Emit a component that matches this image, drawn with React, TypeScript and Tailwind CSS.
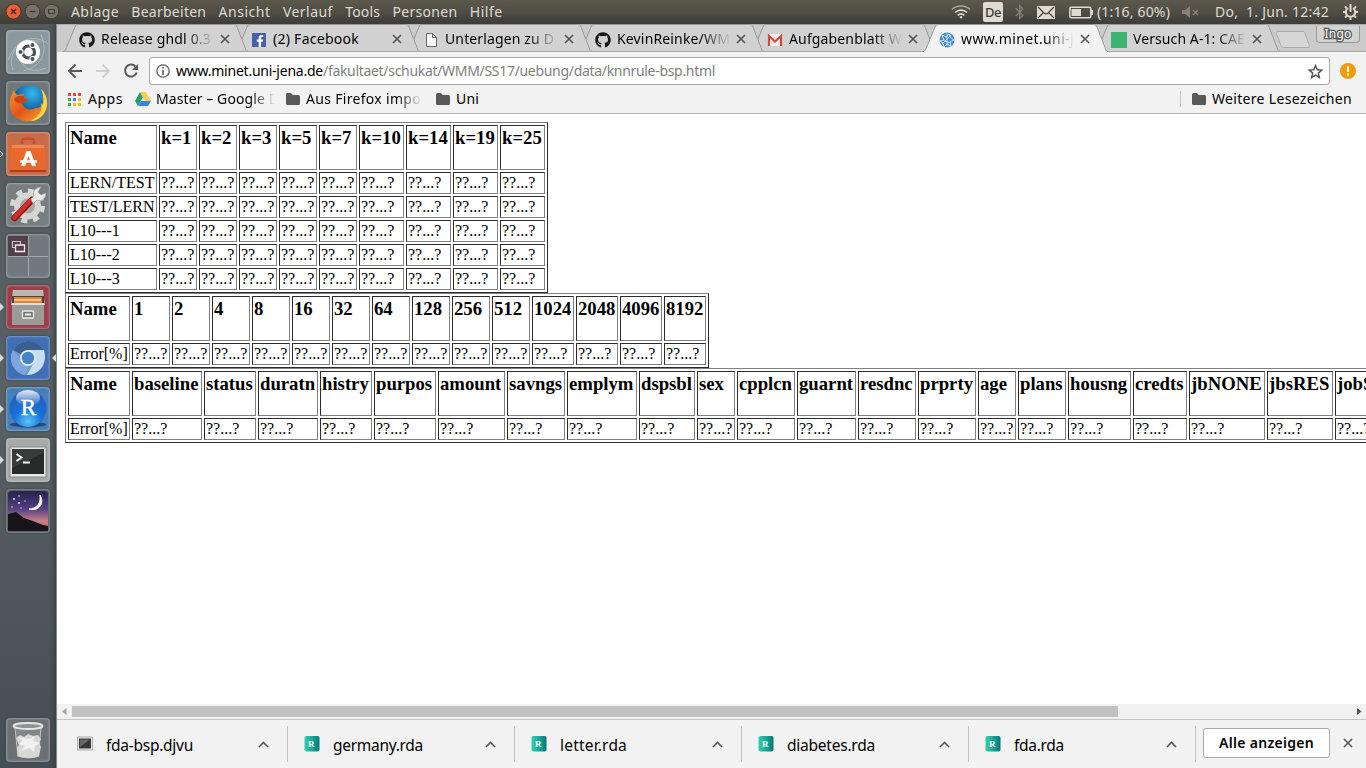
import { useLayoutEffect, useRef, type ReactNode } from "react";
import { FaBluetoothB, FaFacebookF, FaGithub } from "react-icons/fa";

/* Text tracked so that it fills a given width. */
function Fit({ w, className = "", children }: { w: number; className?: string; children: ReactNode }) {
  const ref = useRef<HTMLSpanElement>(null);
  useLayoutEffect(() => {
    const el = ref.current;
    if (!el) return;
    el.style.letterSpacing = "0px";
    const count = (el.textContent || "").length;
    el.style.letterSpacing = `${(w - el.getBoundingClientRect().width) / count}px`;
  }, [w]);
  return (
    <span ref={ref} className={`inline-block shrink-0 whitespace-pre ${className}`}>
      {children}
    </span>
  );
}

const menus: [string, number][] = [
  ["Ablage", 48],
  ["Bearbeiten", 75],
  ["Ansicht", 52],
  ["Verlauf", 50],
  ["Tools", 35],
  ["Personen", 65],
  ["Hilfe", 33],
];

function TopBar() {
  return (
    <header className="flex h-6 shrink-0 items-center bg-gradient-to-b from-[#5c584c] via-[#504d45] to-[#3d3c38] text-[14px] leading-6 text-[#dfdbd2]">
      <svg width="62" height="24" viewBox="0 0 62 24" className="mr-[9px] shrink-0" fill="none">
        <circle cx="13.5" cy="11.5" r="7.5" fill="#ec5f32" stroke="#3b2a22" strokeWidth=".8" />
        <path d="M11 9l5 5M16 9l-5 5" stroke="#4a2416" strokeWidth="1.4" />
        <circle cx="32.5" cy="11.5" r="7.3" fill="#77736a" stroke="#3c3b37" />
        <path d="M29.5 11.5h6" stroke="#3c3b37" strokeWidth="1.4" />
        <circle cx="51.5" cy="11.5" r="7.3" fill="#77736a" stroke="#3c3b37" />
        <path d="M48.5 9.5h6v4h-6z" stroke="#3c3b37" strokeWidth="1.2" />
      </svg>
      <nav className="flex gap-[12.3px]">
        {menus.map(([m, w]) => (
          <Fit key={m} w={w}>{m}</Fit>
        ))}
      </nav>
      <div className="ml-auto flex items-center">
        <svg width="20" height="16" viewBox="0 0 20 16" fill="none" strokeWidth="1.6" className="mr-[12px]">
          <path d="M1 5.5C6 .8 14 .8 19 5.5" stroke="#aaa69c" />
          <path d="M4 8.500c3.500-3.200 8.500-3.200 12 0" stroke="#dfdbd2" />
          <path d="M6.700 11.300c2-1.700 4.600-1.700 6.600 0" stroke="#dfdbd2" />
          <path d="M8.300 13l1.700-1 1.700 1-1.700 1.700z" fill="#dfdbd2" />
        </svg>
        <span className="mr-[9px] flex h-5 w-5 items-center justify-center rounded-[2px] bg-[#dfdbd2] text-[13px] leading-5 font-medium text-[#3c3b37]">
          <Fit w={16}>De</Fit>
        </span>
        <FaBluetoothB className="mr-[10px] h-4 w-[15px] text-[#858176]" />
        <svg width="18" height="13" viewBox="0 0 18 13" className="mr-[14px]">
          <path d="M0 0h18v13H0z" fill="#dfdbd2" />
          <path d="M1 1l6 6 2 1 2-1 6-6M1 12l5-5M17 12l-5-5" fill="none" stroke="#45433d" strokeWidth="1.2" />
        </svg>
        <svg width="25" height="13" viewBox="0 0 25 13" className="mr-[3px]">
          <rect x=".8" y="1.200" width="21" height="10.600" rx="1.500" fill="none" stroke="#dfdbd2" strokeWidth="1.500" />
          <path d="M2.500 3h9.500v7H2.500zM22 4h2v5h-2z" fill="#dfdbd2" />
        </svg>
        <Fit w={73} className="mr-[12px]">(1:16, 60%)</Fit>
        <svg width="19" height="14" viewBox="0 0 19 14" className="mr-[14px]">
          <path d="M0 5h3l5-4v12L3 9H0z" fill="#858176" />
          <path d="M11 5l5 5M16 5l-5 5" stroke="#858176" strokeWidth="1.500" />
        </svg>
        <Fit w={114} className="mr-[13px]">Do,  1. Jun. 12:42</Fit>
        <svg width="17" height="18" viewBox="0 0 17 18" className="mr-[7px]" fill="none" stroke="#dfdbd2">
          <path d="M6 5a4.700 4.700 0 1 0 5 0" strokeWidth="2" />
          <path d="M8.500 1v8" strokeWidth="2" />
          <path d="M1 9h2M14 9h2M8.500 14.500V17M3 3.500l1.500 1.500M14 3.500L12.500 5M3 14.500L4.700 13M14 14.500L12.300 13" strokeWidth="2" />
        </svg>
      </div>
    </header>
  );
}

function Ubuntu() {
  return (
    <svg viewBox="0 0 44 44" fill="none">
      <path d="M2 30C12 5 31 5 42 14M7 40C0 22 17 5 35 12M40 38C20 46 9 32 15 14M35 5c8 17 0 32-18 36" stroke="#c8d0d3" strokeWidth="1" opacity=".55" />
      <circle cx="22" cy="22" r="12" fill="#fff" />
      <circle cx="22.500" cy="22" r="6" stroke="#46525a" strokeWidth="3.200" />
      <g fill="#46525a" stroke="#fff" strokeWidth="1.200">
        <circle cx="14.500" cy="22" r="2.600" /><circle cx="26.500" cy="14.900" r="2.600" /><circle cx="26.500" cy="29.100" r="2.600" />
      </g>
    </svg>
  );
}

function Firefox() {
  return (
    <svg viewBox="0 0 44 44">
      <defs>
        <radialGradient id="globe" cx=".6" cy=".25" r=".8"><stop stopColor="#35b9ec" /><stop offset=".6" stopColor="#1463a5" /><stop offset="1" stopColor="#122f68" /></radialGradient>
        <linearGradient id="fox" x2="1" y2="1"><stop stopColor="#f39b27" /><stop offset=".5" stopColor="#e4531b" /><stop offset="1" stopColor="#f6b331" /></linearGradient>
      </defs>
      <circle cx="23" cy="21" r="17" fill="url(#globe)" />
      <path d="M35 8c7 6 8 18 2 25-7 9-20 9-28 3C3 31 2 20 6 14l1-5 4 5 7-1c-1 2 1 4 4 5-1 3-5 3-6 5 4 7 10 6 14 4 8 0 8-8 6-12l2 2C38 12 37 10 35 8z" fill="url(#fox)" />
      <path d="M35 8c7 6 9 19 1 27-3 3-7 5-11 5 8-5 12-10 10-18l2 2c1-7 0-11-2-16z" fill="#fbd442" />
      <path d="M8 18c2-3 6-4 10-3 0 2 1 3 4 3-1 3-5 3-6 5-3-1-6 0-8-5z" fill="#c9431a" />
    </svg>
  );
}

function Software() {
  return (
    <svg viewBox="0 0 44 44">
      <path d="M16 12V8c0-2 12-2 12 0v4" fill="none" stroke="#c64c2c" strokeWidth="2.500" />
      <path d="M5 14h34l1 25H4z" fill="#e9682d" />
      <path d="M6 13h32v3H6z" fill="#ef8952" />
      <path d="M4 38h36v2H4z" fill="#ac3e20" />
      <path d="M15 34l5.500-15h4L30 34h-4l-3.500-10-3.500 10z" fill="#fff" />
      <path d="M14 29.500h17" stroke="#fff" strokeWidth="2.500" />
    </svg>
  );
}

function Settings() {
  return (
    <svg viewBox="0 0 44 44">
      <circle cx="21.500" cy="23" r="15" fill="none" stroke="#d7d7d5" strokeWidth="5" strokeDasharray="6 5.780" />
      <circle cx="21.500" cy="23" r="10.500" fill="#a6a8a7" stroke="#d5d5d3" strokeWidth="6" />
      <path d="M8.500 35L26 17" stroke="#861615" strokeWidth="6.500" strokeLinecap="round" />
      <path d="M8.500 34.500L25 17" stroke="#d42e2b" strokeWidth="4.500" strokeLinecap="round" />
      <path d="M25 16l3-3c-2-5 2-9 7-9l-3 5 3 3 5-2c0 6-5 9-9 7l-4 4z" fill="#e9e9e8" stroke="#999" strokeWidth=".6" />
    </svg>
  );
}

function Workspaces() {
  return (
    <svg viewBox="0 0 44 44">
      <path d="M2 2h20v20H2z" fill="#563d4a" />
      <path d="M22.500 2v40M2 22.500h40" stroke="#a0a8aa" strokeWidth="1" />
      <path d="M6.500 7.500h8v6h-8z" fill="#563d4a" stroke="#c9c1c6" strokeWidth="1.200" />
      <path d="M9.500 11h9v6.500h-9z" fill="#563d4a" stroke="#f0ecee" strokeWidth="1.300" />
    </svg>
  );
}

function Files() {
  return (
    <svg viewBox="0 0 44 44">
      <path d="M7 5h30l2 15H5z" fill="#b8b8b6" />
      <path d="M6 11h32v10H6z" fill="#454340" />
      <path d="M8 12h28v7H8z" fill="#e3843c" /><path d="M8 14h27v2H8z" fill="#f6c583" />
      <path d="M6 18h32v22H6z" fill="#9b9b99" /><path d="M6 18h32v2H6z" fill="#dedddb" />
      <rect x="16.500" y="26" width="11" height="7" rx="1" fill="#777" stroke="#eee" strokeWidth="1.300" />
      <path d="M19 28.500h6v2h-6z" fill="#f3f3f3" />
    </svg>
  );
}

function Chromium() {
  return (
    <svg viewBox="0 0 44 44">
      <circle cx="22" cy="22" r="17" fill="#719bd1" />
      <path d="M22 22L7 14C14 2 31 2 37 14z" fill="#395f93" />
      <path d="M22 14h16c4 14-5 25-17 25l8-14z" fill="#c8dcf2" />
      <path d="M7 14l8 12 7 5-3 8C7 37 2 23 7 14z" fill="#7da7dc" />
      <circle cx="22" cy="22" r="8" fill="#e1effc" /><circle cx="22" cy="22" r="6.200" fill="#4583c6" />
    </svg>
  );
}

function RStudio() {
  return (
    <svg viewBox="0 0 44 44">
      <defs><radialGradient id="ball" cx=".5" cy=".85" r=".8"><stop stopColor="#59c4f5" /><stop offset=".45" stopColor="#1673d8" /><stop offset="1" stopColor="#275bbd" /></radialGradient>
        <linearGradient id="shine" x2="0" y2="1"><stop stopColor="#fff" stopOpacity=".9" /><stop offset="1" stopColor="#fff" stopOpacity="0" /></linearGradient></defs>
      <ellipse cx="22" cy="37.500" rx="18" ry="3" fill="#294982" />
      <circle cx="22" cy="21.500" r="18.500" fill="url(#ball)" />
      <ellipse cx="22" cy="11" rx="12" ry="8" fill="url(#shine)" />
      <text x="22.500" y="28" textAnchor="middle" fontSize="23" fontFamily="Liberation Serif, serif" fill="#fff" stroke="#fff" strokeWidth=".5">R</text>
    </svg>
  );
}

function Terminal() {
  return (
    <svg viewBox="0 0 44 44">
      <path d="M4 9h36v30H4z" fill="#e9e9e7" stroke="#888" />
      <path d="M6 11h32v25H6z" fill="#292b2b" /><path d="M6 11h32v4L6 30z" fill="#464848" opacity=".6" />
      <path d="M10.500 16l5 3.500-5 3.500M17 24.500h7" fill="none" stroke="#fff" strokeWidth="1.900" />
    </svg>
  );
}

function Stellarium() {
  return (
    <svg viewBox="0 0 44 44">
      <defs><linearGradient id="night" x2="0" y2="1"><stop stopColor="#26214e" /><stop offset=".45" stopColor="#544083" /><stop offset=".75" stopColor="#c9808a" /><stop offset="1" stopColor="#c85c37" /></linearGradient></defs>
      <rect x="2" y="2" width="40" height="40" rx="4" fill="url(#night)" />
      <path d="M2 25l8-2 8 6 9 3 10 4 5 1v5H2z" fill="#17141a" />
      <path d="M34 6c5 8-1 17-11 14 8 0 12-6 11-14z" fill="#fff" stroke="#fff" />
      <g fill="#e6e4f7"><circle cx="8" cy="10" r="1" /><circle cx="13" cy="7" r=".8" /><circle cx="13" cy="14" r="1" /><circle cx="6" cy="18" r=".8" /><circle cx="19" cy="12" r=".7" /><circle cx="15" cy="19" r=".7" /></g>
    </svg>
  );
}

function Trash() {
  return (
    <svg viewBox="0 0 44 44">
      <path d="M9 10h27l-3 29H12z" fill="#989d9e" opacity=".5" />
      <path d="M10 20l4-3 4 2 4-3 5 2 5-1 3 4-2 4 2 4-2 9c-4 3-17 3-21 0l-1-8 2-3z" fill="#d7d7d5" />
      <path d="M12 19l5 3-4 4 6 2-4 5 8-3 5 4 1-6 5-3-7-2 2-5-6 3z" fill="#f8f8f7" opacity=".8" />
      <ellipse cx="22" cy="8" rx="14.500" ry="3" fill="#8f9393" stroke="#e6e6e4" strokeWidth="1.800" />
      <path d="M9 10l3 29M35 10l-3 29" stroke="#dadddd" opacity=".7" />
    </svg>
  );
}

const launchers: { bg: string; icon: ReactNode; run?: "open" | "idle" | "focus" }[] = [
  { bg: "bg-[#8b999f]", icon: <Ubuntu /> },
  { bg: "bg-[#70777a]", icon: <Firefox /> },
  { bg: "bg-[#c96c49]", icon: <Software />, run: "idle" },
  { bg: "bg-[#787e80]", icon: <Settings /> },
  { bg: "bg-[#70797d]", icon: <Workspaces /> },
  { bg: "bg-[#9b3f4c]", icon: <Files />, run: "open" },
  { bg: "bg-[#416fb5]", icon: <Chromium />, run: "focus" },
  { bg: "bg-[#467fb9]", icon: <RStudio />, run: "open" },
  { bg: "bg-[#a6a9a9]", icon: <Terminal />, run: "open" },
  { bg: "bg-[#535960]", icon: <Stellarium /> },
];

function Tile({ bg, icon, run }: { bg: string; icon: ReactNode; run?: string }) {
  return (
    <div className="flex h-[44px] items-center">
      <svg width="6" height="8" viewBox="0 0 6 8" className="shrink-0">
        {run === "idle" && <path d="M0 1l3 3-3 3" fill="none" stroke="#d7dada" />}
        {(run === "open" || run === "focus") && <path d="M0 0l4 4-4 4z" fill="#d7dada" />}
      </svg>
      <div className={`h-[44px] w-[44px] shrink-0 overflow-hidden rounded-[4px] shadow-[inset_0_0_2px_1px_rgba(255,255,255,0.3),0_0_2px_#303638] ${bg}`}>{icon}</div>
      {run === "focus" && <svg width="6" height="8" viewBox="0 0 6 8"><path d="M6 0L2 4l4 4z" fill="#d7dada" /></svg>}
    </div>
  );
}

function Launcher() {
  return (
    <aside className="flex w-[57px] shrink-0 flex-col justify-between border-r border-[#838a8d] bg-gradient-to-b from-[#52595b] via-[#596164] to-[#454e54] pt-[6px] pb-[6px] shadow-[inset_-6px_0_5px_-5px_#30383b]">
      <div className="flex flex-col gap-[7px]">
        {launchers.map((l, i) => <Tile key={i} {...l} />)}
      </div>
      <Tile bg="bg-[#6a7073]" icon={<Trash />} />
    </aside>
  );
}

const Gmail = () => (
  <svg width="16" height="16" viewBox="0 0 16 16"><path d="M1 2h14v12H1z" fill="#f1eeee" /><path d="M2 14V4l6 5.500L14 4v10" fill="none" stroke="#d6493b" strokeWidth="2.200" /></svg>
);
const Page = () => (
  <svg width="16" height="16" viewBox="0 0 16 16"><path d="M3.500 1.500h6l4 4v9h-10zM9.500 1.500v4h4" fill="#f8f8f8" stroke="#666" /></svg>
);
const Seal = () => (
  <svg width="16" height="16" viewBox="0 0 16 16" fill="none"><circle cx="8" cy="8" r="7.500" fill="#4689cd" /><path d="M3 3l4 2 3-3 2 4 3 2-4 2 1 4-4-2-3 3-1-4-3-2 4-1zM8 1v13M3 12l9-9M5 9l7 2" stroke="#d9eaf8" strokeWidth=".9" /></svg>
);

const tabs: { title: string; w: number; icon: ReactNode; z: string; active?: boolean }[] = [
  { title: "Release ghdl 0.3", w: 110, icon: <FaGithub size={16} color="#171515" />, z: "z-[7]" },
  { title: "(2) Facebook", w: 86, icon: <span className="flex h-[14px] w-[14px] items-end justify-end bg-[#4661a5]"><FaFacebookF size={12} color="#fff" /></span>, z: "z-[6]" },
  { title: "Unterlagen zu D", w: 109, icon: <Page />, z: "z-[5]" },
  { title: "KevinReinke/WM", w: 113, icon: <FaGithub size={16} color="#171515" />, z: "z-[4]" },
  { title: "Aufgabenblatt W", w: 113, icon: <Gmail />, z: "z-[3]" },
  { title: "www.minet.uni-j", w: 113, icon: <Seal />, z: "z-[8]", active: true },
  { title: "Versuch A-1: CAE", w: 112, icon: <span className="h-4 w-4 bg-[#3cb371]" />, z: "z-[1]" },
];

function Tabs() {
  return (
    <div className="flex h-7 shrink-0 border-t border-[#aaa] bg-[#cbcbcb] pl-[5px]">
      {tabs.map((t) => (
        <div key={t.title} className={`relative flex h-[28px] w-[172px] shrink-0 items-center pl-[17px] ${t.z}`}>
          <svg width="187" height="28" viewBox="0 0 187 28" className="absolute top-[-1px] left-0">
            <path d="M.5 27.500c3 0 3-2 4-4L13 3c1-2 1-2.500 3-2.500h155c2 0 3 0 4 2.500l8 20.500c1 3 1 4 3 4" fill={t.active ? "#f2f2f2" : "#d2d2d2"} stroke="#999" />
            {t.active ? <path d="M2 27.500h183" stroke="#f2f2f2" /> : <path d="M0 27.500h187" stroke="#a4a4a4" />}
          </svg>
          <span className="relative mt-[1px] flex w-[16px] shrink-0 justify-center">{t.icon}</span>
          <span className={`relative ml-[6px] flex w-[116px] overflow-hidden text-[14px] leading-6 text-black ${t.w > 90 ? "[mask-image:linear-gradient(to_right,#000_72%,transparent_98%)]" : ""}`}>
            <Fit w={t.w}>{t.title}</Fit>
          </span>
          <svg width="10" height="10" viewBox="0 0 10 10" className="relative ml-[3px] shrink-0"><path d="M1 1l8 8M9 1L1 9" stroke="#555" strokeWidth="1.700" /></svg>
        </div>
      ))}
      <div className="flex h-[27px] flex-1 justify-between border-b border-[#a4a4a4]">
        <svg width="36" height="20" viewBox="0 0 36 20" className="mt-[5px] ml-[9px] shrink-0"><path d="M3 1.500h24c2 0 2 0 3 2l4 11c1 3 0 3-2 3H10c-2 0-3 0-4-2L1.500 4c-1-2 0-2.500 1.500-2.500z" fill="#d6d6d6" stroke="#aaa" /></svg>
        <span className="mt-[1px] mr-[6px] flex h-[17px] w-[44px] items-center justify-center rounded-b-[4px] border border-t-0 border-[#999] bg-[#d3d3d3] text-[12px] leading-4 text-white [-webkit-text-stroke:2.500px_#555] [paint-order:stroke_fill]">
          <Fit w={27}>Ingo</Fit>
        </span>
      </div>
    </div>
  );
}

const Folder = () => (
  <svg width="14" height="12" viewBox="0 0 14 12" className="shrink-0"><path d="M0 1.500Q0 0 1.500 0H5l1.500 2h6Q14 2 14 3.500v7q0 1.500-1.500 1.500h-11Q0 12 0 10.500z" fill="#595959" /></svg>
);

const dots = ["#ea4335", "#ea4335", "#ea4335", "#34a853", "#4285f4", "#fbbc05", "#34a853", "#fbbc05", "#fbbc05"];

function Toolbar() {
  return (
    <div className="flex h-[62px] shrink-0 flex-col border-b border-[#b6b6b6] bg-[#f2f2f2]">
      <div className="flex h-[37px] items-center pt-[1px] pl-[11px]">
        <svg width="74" height="16" viewBox="0 0 74 16" fill="none" strokeWidth="2" className="mr-[7px] shrink-0">
          <path d="M14 8H1.500M7.500 1.500L1 8l6.500 6.500" stroke="#5a5a5a" />
          <path d="M28 8h12.500M34.500 1.500L41 8l-6.500 6.500" stroke="#d0d0d0" />
          <path d="M67.500 3.500a6 6 0 1 0 1.300 6" stroke="#5a5a5a" /><path d="M70 1v6h-6z" fill="#5a5a5a" />
        </svg>
        <div className="flex h-[28px] w-[1181px] items-center rounded-[3px] border border-[#a9a9a9] bg-white px-[6px]">
          <svg width="14" height="14" viewBox="0 0 14 14" className="mr-[6px] shrink-0"><circle cx="7" cy="7" r="6.200" fill="none" stroke="#5a5a5a" strokeWidth="1.300" /><path d="M6.200 3h1.600v1.600H6.200zM6.200 6h1.600v5H6.200z" fill="#5a5a5a" /></svg>
          <Fit w={147} className="text-[14px] leading-6 text-black">www.minet.uni-jena.de</Fit>
          <Fit w={392} className="text-[14px] leading-6 text-[#808080]">/fakultaet/schukat/WMM/SS17/uebung/data/knnrule-bsp.html</Fit>
          <svg width="15" height="15" viewBox="0 0 15 15" className="ml-auto"><path d="M7.500 1.500l1.700 4.300 4.600.3-3.500 3 1.100 4.500-3.900-2.500-3.900 2.500 1.100-4.500-3.500-3 4.600-.3z" fill="none" stroke="#555" strokeWidth="1.400" /></svg>
        </div>
        <svg width="16" height="16" viewBox="0 0 16 16" className="ml-[10px]"><circle cx="8" cy="8" r="8" fill="#f29a0c" /><path d="M7 3.500h2v5.500H7zM7 10.500h2v2H7z" fill="#fff" /></svg>
      </div>
      <div className="flex h-[20px] items-center pl-[11px] text-[14px] leading-5 text-black">
        <svg width="13" height="13" viewBox="0 0 13 13" className="mr-[7px] shrink-0">
          {dots.map((c, i) => <rect key={i} x={(i % 3) * 5} y={Math.floor(i / 3) * 5} width="3" height="3" fill={c} />)}
        </svg>
        <Fit w={35} className="mr-[12px]">Apps</Fit>
        <svg width="16" height="14" viewBox="0 0 16 14" className="mr-[5px] shrink-0"><path d="M5 0L0 9l3 5 5-9z" fill="#20a464" /><path d="M5 0h6l5 9h-6z" fill="#ffcf48" /><path d="M3 14l3-5h10l-3 5z" fill="#3b80ee" /></svg>
        <span className="mr-[6px] flex w-[124px] overflow-hidden [mask-image:linear-gradient(to_right,#000_76%,transparent_96%)]"><Fit w={123}>Master – Google D</Fit></span>
        <Folder />
        <span className="mr-[14px] ml-[6px] flex w-[116px] overflow-hidden [mask-image:linear-gradient(to_right,#000_78%,transparent_100%)]"><Fit w={115}>Aus Firefox impo</Fit></span>
        <Folder />
        <Fit w={23} className="ml-[6px]">Uni</Fit>
        <span className="ml-auto h-4 w-px bg-[#c4c4c4]" />
        <span className="w-[11px]" />
        <Folder />
        <Fit w={140} className="mr-[14px] ml-[6px]">Weitere Lesezeichen</Fit>
      </div>
    </div>
  );
}

const GAP = 2;

function DataTable({ cols, rows }: { cols: [string, number][]; rows: string[] }) {
  const cell = "border border-t-[#2c2c2c] border-r-[#808080] border-b-[#808080] border-l-[#2c2c2c] p-px whitespace-nowrap";
  const width = cols.reduce((sum, [, w]) => sum + w + GAP, GAP + 2);
  return (
    <table
      style={{ width }}
      className="table-fixed border-separate border-spacing-[2px] border border-t-[#808080] border-r-[#2c2c2c] border-b-[#2c2c2c] border-l-[#808080]"
    >
      <colgroup>
        {cols.map(([h, w]) => <col key={h} style={{ width: w }} />)}
      </colgroup>
      <thead>
        <tr>
          {cols.map(([h]) => (
            <th key={h} className={`h-[45px] text-left align-top text-[18.72px] leading-[22px] font-bold ${cell}`}>{h}</th>
          ))}
        </tr>
      </thead>
      <tbody>
        {rows.map((r) => (
          <tr key={r}>
            {cols.map(([h], i) => <td key={h} className={`h-[22px] text-[16px] leading-[18px] ${cell}`}>{i ? "??...?" : r}</td>)}
          </tr>
        ))}
      </tbody>
    </table>
  );
}

const neighbours: [string, number][] = [
  ["Name", 89], ["k=1", 38], ["k=2", 38], ["k=3", 38], ["k=5", 38], ["k=7", 38],
  ["k=10", 45], ["k=14", 45], ["k=19", 45], ["k=25", 45],
];

const sizes: [string, number][] = [
  ["Name", 62], ["1", 38], ["2", 38], ["4", 38], ["8", 38], ["16", 38], ["32", 38], ["64", 38],
  ["128", 38], ["256", 38], ["512", 38], ["1024", 42], ["2048", 42], ["4096", 42], ["8192", 42],
];

const attributes: [string, number][] = [
  ["Name", 62], ["baseline", 70], ["status", 52], ["duratn", 60], ["histry", 52], ["purpos", 62],
  ["amount", 67], ["savngs", 58], ["emplym", 70], ["dspsbl", 56], ["sex", 38], ["cpplcn", 58],
  ["guarnt", 59], ["resdnc", 58], ["prprty", 58], ["age", 38], ["plans", 48], ["housng", 63],
  ["credts", 54], ["jbNONE", 76], ["jbsRES", 66], ["jobSKL", 66],
];

function Content() {
  return (
    <main className="min-h-0 flex-1 overflow-hidden bg-white pt-[8px] pl-[8px] font-['Liberation_Serif',serif] text-black">
      <DataTable cols={neighbours} rows={["LERN/TEST", "TEST/LERN", "L10---1", "L10---2", "L10---3"]} />
      <DataTable cols={sizes} rows={["Error[%]"]} />
      <DataTable cols={attributes} rows={["Error[%]"]} />
    </main>
  );
}

const downloads: [string, number][] = [
  ["fda-bsp.djvu", 87],
  ["germany.rda", 90],
  ["letter.rda", 67],
  ["diabetes.rda", 88],
  ["fda.rda", 50],
];

function Downloads() {
  return (
    <footer className="flex h-[49px] shrink-0 items-center border-t border-[#c5c5c5] bg-[#f2f2f2] text-black">
      {downloads.map(([name, w], i) => (
        <div key={name} className={`flex h-[36px] shrink-0 items-center border-r border-[#c3c3c3] ${i ? "w-[227px] pl-[16px]" : "w-[231px] pl-[20px]"}`}>
          {i ? (
            <svg width="16" height="16" viewBox="0 0 16 16" className="mr-[13px] shrink-0">
              <defs><linearGradient id="doc" x2="1" y2="0"><stop stopColor="#35cdb0" /><stop offset=".5" stopColor="#18aa96" /><stop offset="1" stopColor="#067579" /></linearGradient></defs>
              <rect x=".5" y="0" width="15" height="15.500" rx="2" fill="url(#doc)" />
              <text x="7.200" y="10.500" textAnchor="middle" fontSize="9" fontFamily="Liberation Serif, serif" fontWeight="bold" fill="#fff">R</text>
            </svg>
          ) : (
            <svg width="16" height="16" viewBox="0 0 16 16" className="mr-[13px] shrink-0"><path d="M.5 1h15v13H.5z" fill="#eee" stroke="#aaa" /><path d="M2 2.500h12v10H2z" fill="#383838" /><path d="M3 3.500h10L3 11z" fill="#666" /></svg>
          )}
          <Fit w={w} className="pt-px text-[15.500px] leading-6">{name}</Fit>
          <svg width="11" height="7" viewBox="0 0 11 7" className="mr-[18px] ml-auto shrink-0"><path d="M1 6l4.500-4.500L10 6" fill="none" stroke="#5a5a5a" strokeWidth="1.600" /></svg>
        </div>
      ))}
      <button className="mt-[-3px] ml-[7px] flex h-[30px] w-[127px] items-center justify-center rounded-[3px] border border-[#a9a9a9] bg-white text-[14px] font-semibold">
        <Fit w={95}>Alle anzeigen</Fit>
      </button>
      <svg width="10" height="10" viewBox="0 0 10 10" className="mt-[-3px] ml-[13px]"><path d="M1 1l8 8M9 1L1 9" stroke="#555" strokeWidth="1.600" /></svg>
    </footer>
  );
}

export default function App() {
  return (
    <div className="flex h-[768px] w-[1366px] flex-col overflow-hidden font-['Noto_Sans',sans-serif]">
      <TopBar />
      <div className="flex min-h-0 flex-1">
        <Launcher />
        <div className="flex min-w-0 flex-1 flex-col">
          <Tabs />
          <Toolbar />
          <Content />
          <div className="flex h-[15px] shrink-0 items-center bg-[#f1f1f1]">
            <svg width="15" height="15" viewBox="0 0 15 15"><path d="M9.500 4v7L5 7.500z" fill="#a3a3a3" /></svg>
            <span className="h-[11px] w-[1046px] bg-[#c1c1c1]" />
            <svg width="15" height="15" viewBox="0 0 15 15" className="ml-auto"><path d="M6 4v7l4.500-3.500z" fill="#505050" /></svg>
          </div>
          <Downloads />
        </div>
      </div>
    </div>
  );
}
